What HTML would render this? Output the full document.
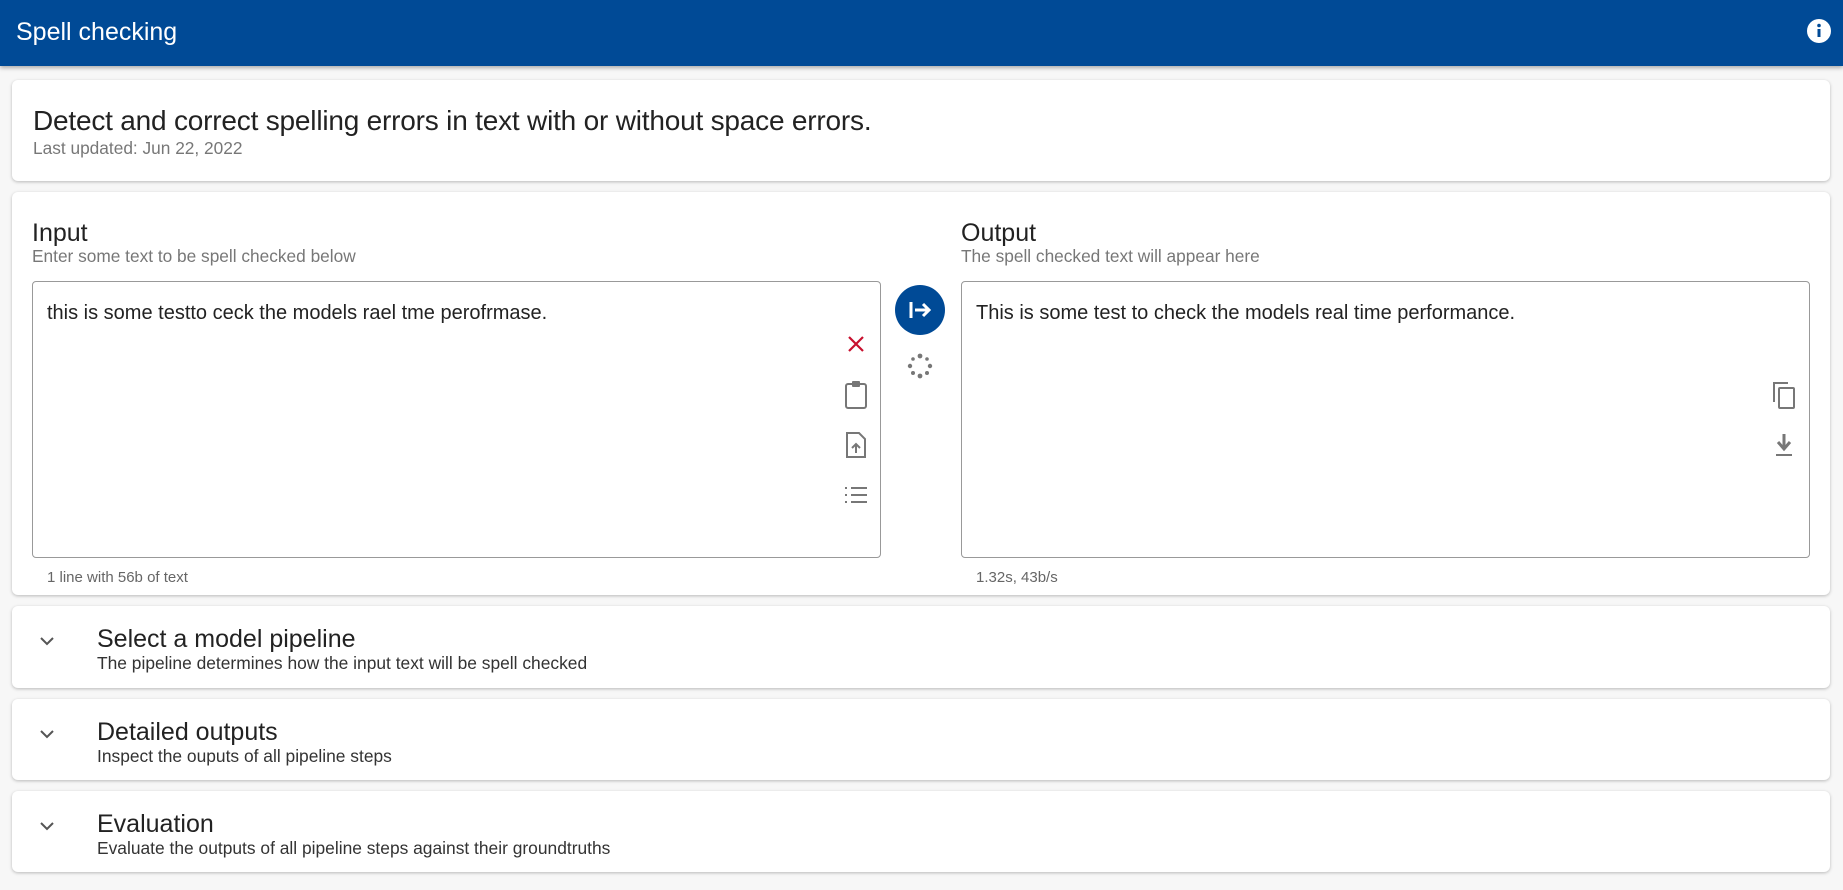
<!DOCTYPE html>
<html><head><meta charset="utf-8"><style>
*{margin:0;padding:0;box-sizing:border-box}
body{width:1843px;height:890px;background:#f7f7f7;font-family:"Liberation Sans",sans-serif;color:#222;position:relative;overflow:hidden}
.abs{position:absolute}
.hdr{left:0;top:0;width:1843px;height:66px;background:#004a96;box-shadow:0 2px 4px rgba(0,0,0,.3)}
.card{left:12px;width:1818px;background:#fff;border-radius:6px;box-shadow:0 1px 3px rgba(0,0,0,.25)}
.t{white-space:nowrap;line-height:1}
.box{border:1px solid #999;border-radius:4px;background:#fff}
.g{color:#777}
</style></head><body>
<div class="abs hdr"></div>
<div class="abs t" style="left:16px;top:20px;font-size:25px;color:#fff">Spell checking</div>
<svg class="abs" style="left:1806px;top:18px" width="26" height="26" viewBox="0 0 26 26"><circle cx="13" cy="13" r="12" fill="#fff"/><rect x="11.5" y="11" width="3" height="8" fill="#004a96"/><circle cx="13" cy="7.5" r="1.8" fill="#004a96"/></svg>

<div class="abs card" style="top:80px;height:101px"></div>
<div class="abs t" style="left:33px;top:107px;font-size:28px;letter-spacing:-0.2px">Detect and correct spelling errors in text with or without space errors.</div>
<div class="abs t g" style="left:33px;top:140px;font-size:17.3px">Last updated: Jun 22, 2022</div>

<div class="abs card" style="top:192px;height:403px"></div>
<div class="abs t" style="left:32px;top:221px;font-size:25px">Input</div>
<div class="abs t g" style="left:32px;top:248px;font-size:17.3px">Enter some text to be spell checked below</div>
<div class="abs t" style="left:961px;top:221px;font-size:25px">Output</div>
<div class="abs t g" style="left:961px;top:248px;font-size:17.3px">The spell checked text will appear here</div>

<div class="abs box" style="left:32px;top:281px;width:849px;height:277px"></div>
<div class="abs t" style="left:47px;top:303px;font-size:20px">this is some testto ceck the models rael tme perofrmase.</div>
<div class="abs box" style="left:961px;top:281px;width:849px;height:277px"></div>
<div class="abs t" style="left:976px;top:303px;font-size:20px">This is some test to check the models real time performance.</div>

<svg class="abs" style="left:844px;top:332px" width="24" height="24" viewBox="0 0 24 24"><path d="M5 5L19 19M19 5L5 19" stroke="#c8102e" stroke-width="2.2"/></svg>
<svg class="abs" style="left:843px;top:380px" width="26" height="30" viewBox="0 0 26 30"><rect x="3" y="4" width="20" height="24" rx="2" fill="none" stroke="#777" stroke-width="2"/><rect x="9" y="1" width="8" height="6" rx="1" fill="#777"/></svg>
<svg class="abs" style="left:844px;top:431px" width="24" height="28" viewBox="0 0 24 28"><path d="M3 2H15L21 8V26H3Z" fill="none" stroke="#777" stroke-width="2"/><path d="M12 22V13M8 17L12 13L16 17" fill="none" stroke="#777" stroke-width="2"/></svg>
<svg class="abs" style="left:843px;top:485px" width="26" height="20" viewBox="0 0 26 20"><path d="M2 3h2M8 3h16M2 10h2M8 10h16M2 17h2M8 17h16" stroke="#777" stroke-width="2"/></svg>

<svg class="abs" style="left:895px;top:285px" width="50" height="50" viewBox="0 0 50 50"><circle cx="25" cy="25" r="25" fill="#004a96"/><path d="M16 17V33M20 25H34M28 19L34 25L28 31" fill="none" stroke="#fff" stroke-width="3"/></svg>
<svg class="abs" style="left:907px;top:353px" width="26" height="26" viewBox="0 0 26 26" fill="#777"><circle cx="13" cy="3" r="2.4"/><circle cx="13" cy="23" r="2.4"/><circle cx="3" cy="13" r="2.2"/><circle cx="23" cy="13" r="2.2"/><circle cx="6" cy="6" r="1.8"/><circle cx="20" cy="6" r="1.8"/><circle cx="6" cy="20" r="2"/><circle cx="20" cy="20" r="2"/></svg>

<svg class="abs" style="left:1770px;top:380px" width="28" height="30" viewBox="0 0 28 30"><path d="M4 22V3H18" fill="none" stroke="#777" stroke-width="2"/><rect x="9" y="8" width="15" height="20" rx="1" fill="none" stroke="#777" stroke-width="2"/></svg>
<svg class="abs" style="left:1772px;top:432px" width="24" height="26" viewBox="0 0 24 26"><path d="M12 2V16M6 10L12 17L18 10" fill="none" stroke="#777" stroke-width="3"/><path d="M4 23H20" stroke="#777" stroke-width="2"/></svg>

<div class="abs t g" style="left:47px;top:570px;font-size:15px;color:#666">1 line with 56b of text</div>
<div class="abs t g" style="left:976px;top:570px;font-size:15px;color:#666">1.32s, 43b/s</div>

<div class="abs card" style="top:606px;height:82px"></div>
<div class="abs card" style="top:699px;height:81px"></div>
<div class="abs card" style="top:791px;height:81px"></div>

<svg class="abs" style="left:37px;top:633px" width="20" height="16" viewBox="0 0 20 16"><path d="M4 5L10 11L16 5" fill="none" stroke="#555" stroke-width="2"/></svg>
<svg class="abs" style="left:37px;top:726px" width="20" height="16" viewBox="0 0 20 16"><path d="M4 5L10 11L16 5" fill="none" stroke="#555" stroke-width="2"/></svg>
<svg class="abs" style="left:37px;top:818px" width="20" height="16" viewBox="0 0 20 16"><path d="M4 5L10 11L16 5" fill="none" stroke="#555" stroke-width="2"/></svg>

<div class="abs t" style="left:97px;top:627px;font-size:25px">Select a model pipeline</div>
<div class="abs t" style="left:97px;top:655px;font-size:17.4px;color:#333">The pipeline determines how the input text will be spell checked</div>
<div class="abs t" style="left:97px;top:720px;font-size:25px">Detailed outputs</div>
<div class="abs t" style="left:97px;top:748px;font-size:17.4px;color:#333">Inspect the ouputs of all pipeline steps</div>
<div class="abs t" style="left:97px;top:812px;font-size:25px">Evaluation</div>
<div class="abs t" style="left:97px;top:840px;font-size:17.4px;color:#333">Evaluate the outputs of all pipeline steps against their groundtruths</div>
</body></html>
